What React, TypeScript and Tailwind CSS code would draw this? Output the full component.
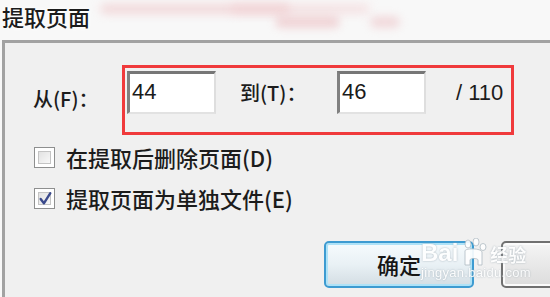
import React from "react";

const FONT = { fontFamily: '"Noto Sans CJK SC", "Liberation Sans", sans-serif' };

function CheckBox({ checked }: { checked?: boolean }) {
    return (
        <div className="w-[21px] h-[21px] border border-[#8e8f8f] bg-white p-[3px] shrink-0">
            <div className="w-full h-full border border-[#c4c4c4] bg-gradient-to-br from-[#e2e2e2] to-[#f8f8f8] relative">
                {checked ?
                    <svg viewBox="0 0 14 14" className="absolute left-[-1px] top-[-2px] w-[15px] h-[15px]">
                        <path d="M2.5 7.5 L5.5 11.5 L11.5 2" fill="none" stroke="#3b4a8c" strokeWidth="2.2" strokeLinecap="round" strokeLinejoin="round" />
                    </svg> : <></>}
            </div>
        </div>
    );
}

function NumInput({ value }: { value: string }) {
    return (
        <div className="w-[89px] h-[43px] bg-white border-t-[3px] border-l-[3px] border-t-[#767676] border-l-[#808080] border-r-2 border-b-2 border-r-[#dedede] border-b-[#e2e2e2] flex items-center pl-[2px] pb-[2px]">
            <span className="text-[22px] text-[#1b1b1b] leading-none" style={{ fontFamily: '"Liberation Sans", sans-serif' }}>{value}</span>
        </div>
    );
}

export default function App() {
    return (
        <div className="w-[550px] h-[297px] overflow-hidden relative bg-[#f8f8f8] flex flex-col" style={FONT}>
            {/* title bar */}
            <div className="h-[40px] shrink-0 relative overflow-hidden">
                <div className="absolute left-[100px] top-[4px] w-[190px] h-[10px] rounded-full bg-[#eec3c6] blur-[5px] opacity-60"></div>
                <div className="absolute left-[230px] top-[4px] w-[140px] h-[10px] rounded-full bg-[#f2cdd0] blur-[5px] opacity-50"></div>
                <div className="absolute left-[275px] top-[16px] w-[65px] h-[12px] rounded-full bg-[#ebbcc0] blur-[4px] opacity-60"></div>
                <div className="absolute left-[370px] top-[16px] w-[30px] h-[12px] rounded-full bg-[#ebbcc0] blur-[4px] opacity-50"></div>
                <div className="relative pl-[2px] pt-[1px] text-[22px] leading-[30px] font-medium text-[#1c1c1c]" style={{ textShadow: "0 0 6px #ffffff, 0 0 3px #ffffff" }}>提取页面</div>
            </div>

            {/* body */}
            <div className="flex-1 ml-[2px] bg-[#f0f0f0] border-t-[3px] border-l-[3px] border-[#a2a2a2] flex flex-col">
                <div className="flex items-center mt-[22px]">
                    <div className="w-[89px] ml-[28px] text-[20px] font-medium text-[#1c1c1c] pb-[2px]">从(F)：</div>
                    <div className="w-[392px] h-[70px] border-[3px] border-[#f03a3c] flex items-start pt-[3px] pl-[2px]">
                        <NumInput value="44" />
                        <div className="ml-[24px] w-[97px] h-[43px] flex items-center text-[20px] font-medium text-[#1c1c1c]">到(T)：</div>
                        <NumInput value="46" />
                        <div className="ml-[30px] h-[43px] flex items-center text-[22px] text-[#1c1c1c]" style={{ fontFamily: '"Liberation Sans", sans-serif' }}>/ 110</div>
                    </div>
                </div>

                <div className="flex flex-col gap-[15px] mt-[9px] ml-[29px]">
                    <div className="flex items-center gap-[11px] h-[26px]">
                        <CheckBox />
                        <span className="text-[22px] leading-[26px] font-medium text-[#1c1c1c]">在提取后删除页面(D)</span>
                    </div>
                    <div className="flex items-center gap-[11px] h-[26px]">
                        <CheckBox checked />
                        <span className="text-[22px] leading-[26px] font-medium text-[#1c1c1c]">提取页面为单独文件(E)</span>
                    </div>
                </div>

                <div className="flex mt-[30px] ml-[319px] gap-[27px]">
                    <div className="w-[150px] h-[47px] shrink-0 rounded-[5px] border-2 border-[#3d9bd1] shadow-[inset_0_0_0_2px_#aee2f7] bg-gradient-to-b from-[#f6fbfd] via-[#e9f1f5] to-[#d3dde3] flex items-center justify-center">
                        <span className="text-[22px] font-medium text-[#161616]">确定</span>
                    </div>
                    <div className="w-[150px] h-[47px] shrink-0 rounded-[5px] border-2 border-[#707070] shadow-[inset_0_0_0_2px_#fbfbfb] bg-gradient-to-b from-[#f5f5f5] to-[#dcdcdc]"></div>
                </div>
            </div>

            {/* watermark */}
            <div className="absolute left-[421px] top-[238px] text-white opacity-90 pointer-events-none" style={{ textShadow: "0 0 2px #9aa7b0" }}>
                <div className="flex items-end">
                    <span className="text-[24px] leading-[30px] font-bold" style={{ fontFamily: '"Liberation Sans", sans-serif' }}>Bai</span>
                    <svg viewBox="0 0 28 30" className="w-[28px] h-[30px] mx-[2px]">
                        <g fill="#ffffff" stroke="#a7b4bd" strokeWidth="0.8">
                            <ellipse cx="8" cy="6" rx="3" ry="4" />
                            <ellipse cx="16" cy="4" rx="3" ry="4" />
                            <ellipse cx="23" cy="9" rx="3" ry="3.5" />
                            <path d="M5 13 C5 10 21 10 22 14 L22 27 L18 27 L18 22 C18 20 10 20 10 22 L10 27 L5 27 Z" />
                        </g>
                    </svg>
                    <span className="text-[18px] leading-[28px] font-bold">经验</span>
                </div>
                <div className="text-[13px] leading-[14px] -mt-[2px] tracking-[0.3px]" style={{ fontFamily: '"Liberation Sans", sans-serif' }}>jingyan.baidu.com</div>
            </div>
        </div>
    );
}
